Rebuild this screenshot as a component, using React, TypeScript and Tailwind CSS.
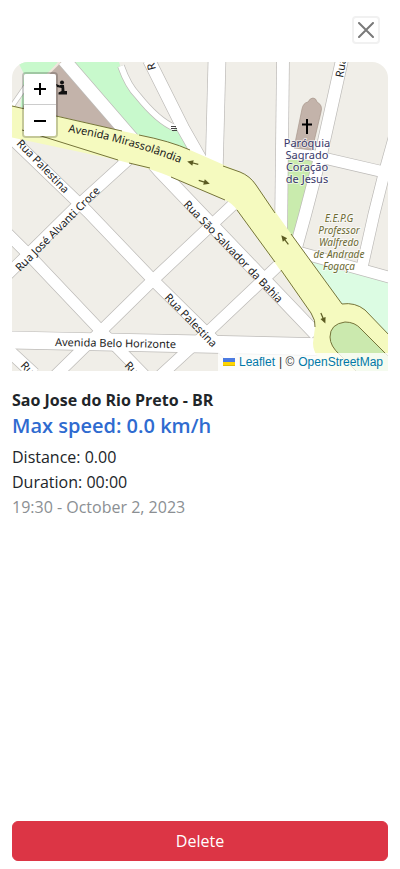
import React from "react";

type Label = { text: string; x: number; y: number; angle: number };

// Side streets, as centre lines with their widths.
const streets: { d: string; w: number }[] = [
  { d: "M64 60 L160 171 L316 334", w: 13 },
  { d: "M149 60 L183 128 L204 165", w: 12 },
  { d: "M121 66 Q128 86 138 96 Q158 121 175 128", w: 6 },
  { d: "M217 60 L214 175", w: 17 },
  { d: "M283 60 L281 235", w: 12 },
  { d: "M342 60 L322 150 L305 215 L294 255", w: 12 },
  { d: "M285 149 L388 173", w: 11 },
  { d: "M394 138 L384 174 L374 214 L361 272", w: 11 },
  { d: "M298 252 L392 278", w: 11 },
  { d: "M8 135 L88 212 L153 280 L232 358", w: 11 },
  { d: "M6 232 L27 253 L100 330 L145 376", w: 11 },
  { d: "M6 276 L75 208 L130 158", w: 11 },
  { d: "M55 376 L100 332 L153 280 L238 200", w: 11 },
  { d: "M160 376 L210 330 L284 260", w: 11 },
  { d: "M8 340 L200 344 L330 347", w: 17 },
  { d: "M8 350 L34 374", w: 12 },
  { d: "M8 112 L26 86", w: 4 },
];

const streetLabels: Label[] = [
  { text: "Rua Palestina", x: 16, y: 144, angle: 46 },
  { text: "Rua José Alvanti Croce", x: 20, y: 272, angle: -45 },
  { text: "Rua São Salvador da Bahia", x: 183, y: 205, angle: 46 },
  { text: "Rua Palestina", x: 164, y: 298, angle: 46 },
  { text: "Avenida Belo Horizonte", x: 55, y: 346, angle: 1 },
  { text: "Rua", x: 343, y: 78, angle: -80 },
  { text: "Rua", x: 20, y: 366, angle: 46 },
  { text: "Rua", x: 124, y: 366, angle: 46 },
  { text: "R", x: 156, y: 69, angle: -105 },
];

const edges = [
  "M12 106 L122 131",
  "M139 135 Q170 141 190 150",
  "M223 166 L240 172 Q250 176 256 185 L275 213",
  "M291 234 L342 304 Q355 302 365 310 L390 336",
  "M22 130 L118 160",
  "M129 163 L150 168",
  "M171 177 L225 200",
  "M237 210 L275 262",
  "M281 270 L311 313 Q316 321 315 327",
];

function Arrow({ x, y, angle }: { x: number; y: number; angle: number }) {
  return (
    <g transform={`translate(${x} ${y}) rotate(${angle})`} stroke="#5b5b22" fill="#5b5b22">
      <path d="M-5.500 0 H3" strokeWidth="1.200" />
      <path d="M6 0 L0 -2.800 V2.800Z" stroke="none" />
    </g>
  );
}

function PlaceName({ lines, x, y }: { lines: string[]; x: number; y: number }) {
  return (
    <text x={x} y={y}>
      {lines.map((line, i) => (
        <tspan key={line} x={x} dy={i === 0 ? 0 : 12}>
          {line}
        </tspan>
      ))}
    </text>
  );
}

function MapTiles() {
  return (
    <svg
      className="absolute inset-0 h-full w-full font-['Noto_Sans','Open_Sans',sans-serif]"
      viewBox="12 62 376 309"
      preserveAspectRatio="xMidYMid slice"
      role="img"
      aria-label="Street map"
    >
      <rect x="12" y="62" width="376" height="309" fill="#f0eee8" />

      <path d="M18 62 H58 L48 74 L40 90 L20 112 L24 74Z" fill="#c8f9cc" />
      <path d="M68 62 H119 L121 68 L136 92 L160 118 L178 130 L194 158 L130 140Z" fill="#c8f9cc" />
      <path d="M60 62 L126 136 L22 112 L26 98Z" fill="#c3b3aa" stroke="#ab9a8e" strokeWidth=".6" />
      <path d="M60 62 L24 98" stroke="#f0e6dc" strokeWidth="2" />
      <path d="M288 160 H313 L294 240 L284 228Z" fill="#c9ebad" />
      <path d="M304 254 L390 280 V340 L340 312Z" fill="#dcfce3" />

      <g fill="none" stroke="#bdbbb8" strokeLinejoin="round">
        {streets.map((s, i) => (
          <path key={i} d={s.d} strokeWidth={s.w + 1.4} />
        ))}
      </g>
      <g fill="none" stroke="#fff" strokeLinejoin="round">
        {streets.map((s, i) => (
          <path key={i} d={s.d} strokeWidth={s.w} />
        ))}
      </g>

      <path
        d="M294 148 L302 109 Q303 103 308 102 Q310 98 313 98 Q316 98 317 102 Q323 105 321 112 L312 150Z"
        fill="#c3b3aa"
        stroke="#a8978b"
        strokeWidth=".7"
      />

      <path
        d="M10 105 L122 131 Q170 141 190 150 L240 172 Q250 176 256 185 L312 263 L342 304 Q355 302 365 310 L390 336 V373 H334 Q313 358 313 343 L315 327 Q316 321 311 313 L237 210 Q232 203 225 200 L171 177 Q150 168 113 159 L10 137Z"
        fill="#f5fabf"
      />
      <g fill="none" stroke="#75743a" strokeWidth="1">
        {edges.map((d) => (
          <path key={d} d={d} />
        ))}
      </g>
      <path
        d="M390 358 L361 329 Q355 322 345 322 Q330 324 330 337 Q330 346 340 355 L358 373 H390Z"
        fill="#cbe9ae"
        stroke="#75743a"
      />

      <Arrow x={193} y={163} angle={195} />
      <Arrow x={204} y={182} angle={17} />
      <Arrow x={285} y={240} angle={-128} />
      <Arrow x={323} y={318} angle={67} />

      {/* Steps at the end of the footpath */}
      <path d="M171 126.500 h5 M171 128.500 h6 M172 130.500 h5" stroke="#444" strokeWidth="1" />

      {/* Kneeling figure */}
      <g fill="#111">
        <circle cx="62" cy="82.500" r="2" />
        <path d="M60 85 H64 L64.500 91 H67 V94.500 H58.500 V92.500 L61.500 91 V88 L57 87 L56 84 L60 85.500Z" />
      </g>
      <path d="M307 119 V134 M302 124.500 H312" stroke="#000" strokeWidth="2" />

      <defs>
        <path id="avenue-line" d="M68 132 Q130 142 192 168" />
      </defs>
      <g fontSize="11" fill="#1c1c1c">
        <text>
          <textPath href="#avenue-line">Avenida Mirassolândia</textPath>
        </text>
        {streetLabels.map((l, i) => (
          <text key={i} transform={`translate(${l.x} ${l.y}) rotate(${l.angle})`}>
            {l.text}
          </text>
        ))}
      </g>

      <g
        textAnchor="middle"
        stroke="#fff"
        strokeOpacity=".6"
        strokeWidth="2"
        paintOrder="stroke"
      >
        <g fontSize="11" fill="#39396b">
          <PlaceName x={307} y={147} lines={["Paróquia", "Sagrado", "Coração", "de Jesus"]} />
        </g>
        <g fontSize="10" fontStyle="italic" fill="#6c6a33">
          <PlaceName
            x={339}
            y={222}
            lines={["E.E.P.G", "Professor", "Walfredo", "de Andrade", "Fogaça"]}
          />
        </g>
      </g>
    </svg>
  );
}

function ZoomControls() {
  return (
    <div className="absolute top-2.5 left-2.5 flex w-9 flex-col overflow-hidden rounded border-2 border-black/20 bg-clip-padding">
      <button
        type="button"
        aria-label="Zoom in"
        className="flex h-[31px] items-center justify-center border-b border-[#ccc] bg-white"
      >
        <svg className="size-3" viewBox="0 0 12 12" stroke="#000" strokeWidth="2">
          <path d="M0 6 H12 M6 0 V12" />
        </svg>
      </button>
      <button type="button" aria-label="Zoom out" className="flex h-[31px] items-center justify-center bg-white">
        <svg className="size-3" viewBox="0 0 12 12" stroke="#000" strokeWidth="2">
          <path d="M0 6 H12" />
        </svg>
      </button>
    </div>
  );
}

export default function App() {
  return (
    <div className="flex min-h-screen flex-col bg-white px-3 pt-4 pb-2 font-['Open_Sans','Noto_Sans',sans-serif] text-base text-[#212529]">
      <header className="flex justify-end pr-2">
        <button
          type="button"
          aria-label="Close"
          className="flex size-7 items-center justify-center rounded border-2 border-[#f1f1f1] bg-white"
        >
          <svg className="size-4 shrink-0" viewBox="0 0 16 16" stroke="#7a7a7a" strokeWidth="2" strokeLinecap="round">
            <path d="M1 1 L15 15 M15 1 L1 15" />
          </svg>
        </button>
      </header>

      <main className="mt-[18px] flex grow flex-col">
        <div className="relative h-[309px] overflow-hidden rounded-t-2xl">
          <MapTiles />
          <ZoomControls />
          <div className="absolute right-0 bottom-0 flex items-center gap-1 bg-white/80 px-[5px] font-['Liberation_Sans',sans-serif] text-xs leading-[18px] text-[#333]">
            <a href="#leaflet" className="flex items-center gap-1 text-[#0078a8]">
              <svg className="h-2 w-3" viewBox="0 0 12 8" aria-hidden="true">
                <path d="M0 0h12v4H0z" fill="#4c7be1" />
                <path d="M0 4h12v3H0z" fill="#ffd500" />
                <path d="M0 7h12v1H0z" fill="#e0bc00" />
              </svg>
              Leaflet
            </a>
            <span>| ©</span>
            <a href="#openstreetmap" className="text-[#0078a8]">
              OpenStreetMap
            </a>
          </div>
        </div>

        <section className="mt-4">
          <h1 className="pt-px leading-6 font-bold">Sao Jose do Rio Preto - BR</h1>
          <p className="text-xl leading-7 font-semibold text-[#2f6bd0]">Max speed: 0.0 km/h</p>
          <p className="mt-[5px] leading-[25px]">Distance: 0.00</p>
          <p className="leading-[25px]">Duration: 00:00</p>
          <p className="leading-[25px] text-[#8b8f93]">19:30 - October 2, 2023</p>
        </section>

        <button
          type="button"
          className="mt-auto h-10 w-full rounded-md border border-[#dc3545] bg-[#dc3545] text-white"
        >
          Delete
        </button>
      </main>
    </div>
  );
}
